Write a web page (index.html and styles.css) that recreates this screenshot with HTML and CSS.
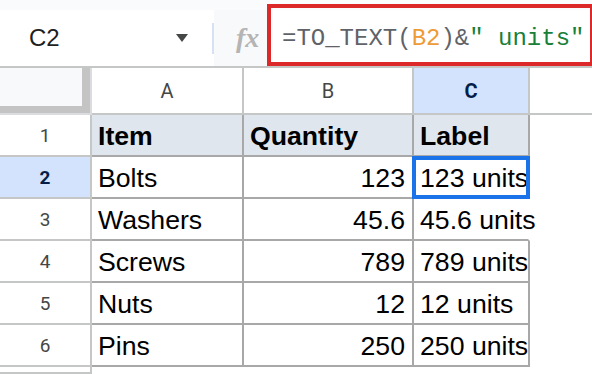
FILE: index.html
```html
<!DOCTYPE html>
<html lang="en">

<head>
    <meta charset="UTF-8">
    <meta name="viewport" content="width=device-width, initial-scale=1.0">
    <title>TO_TEXT units</title>
    <link rel="stylesheet" href="styles.css">
</head>

<body>
    <div class="strip"></div>

    <!--Barra de formulas-->
    <div class="toolbar">
        <div class="namebox">
            <span class="ref">C2</span>
            <i class="caret"></i>
        </div>
        <div class="divider"></div>
        <div class="fx">fx</div>
        <div class="formula">
            <span class="op">=TO_TEXT(</span><span class="range">B2</span><span class="op">)&amp;</span><span class="str">" units"</span>
        </div>
        <div class="highlight"></div>
    </div>

    <!--Hoja-->
    <div class="sheet">
        <div class="corner"><i></i></div>
        <div class="col">A</div>
        <div class="col">B</div>
        <div class="col active">C</div>
        <div class="col last"></div>

        <div class="row">1</div>
        <div class="cell head">Item</div>
        <div class="cell head">Quantity</div>
        <div class="cell head end">Label</div>
        <div class="blank"></div>

        <div class="row active">2</div>
        <div class="cell">Bolts</div>
        <div class="cell num">123</div>
        <div class="cell end selected">123 units</div>
        <div class="blank"></div>

        <div class="row">3</div>
        <div class="cell">Washers</div>
        <div class="cell num">45.6</div>
        <div class="cell">45.6 units</div>
        <div class="blank"></div>

        <div class="row">4</div>
        <div class="cell">Screws</div>
        <div class="cell num">789</div>
        <div class="cell end">789 units</div>
        <div class="blank"></div>

        <div class="row">5</div>
        <div class="cell">Nuts</div>
        <div class="cell num">12</div>
        <div class="cell end">12 units</div>
        <div class="blank"></div>

        <div class="row">6</div>
        <div class="cell">Pins</div>
        <div class="cell num">250</div>
        <div class="cell end">250 units</div>
        <div class="blank"></div>

        <div class="row"></div>
        <div class="blank"></div>
        <div class="blank"></div>
        <div class="blank"></div>
        <div class="blank"></div>
    </div>
</body>

</html>
```

FILE: styles.css
```css
* {
    box-sizing: border-box;
}

body {
    margin: 0;
    height: 100vh;
    overflow: hidden;
    background-color: #fff;
    font-family: 'Liberation Sans', Arial, sans-serif;
}

.strip {
    height: 10px;
    background-color: #f9fbfd;
}

/*Barra de formulas*/
.toolbar {
    position: relative;
    display: flex;
    height: 58px;
    border-bottom: 2px solid #c4c7c5;
}

.namebox {
    width: 212px;
    display: flex;
    align-items: center;
    padding-left: 29px;
    padding-right: 24px;

    .ref {
        font-size: 24px;
        color: #1f1f1f;
    }

    .caret {
        margin-left: auto;
        width: 0;
        height: 0;
        border-left: 6px solid transparent;
        border-right: 6px solid transparent;
        border-top: 8px solid #444746;
    }
}

.divider {
    align-self: center;
    width: 2px;
    height: 31px;
    background-color: #d6e2f3;
}

.fx {
    width: 53px;
    display: flex;
    align-items: center;
    padding-left: 22px;
    background-color: #f8f9fa;
    font-family: 'Liberation Serif', serif;
    font-style: italic;
    font-weight: bold;
    font-size: 28px;
    color: #b4b4b4;
}

.formula {
    flex-grow: 1;
    display: flex;
    align-items: center;
    padding-left: 15px;
    white-space: nowrap;
    font-family: 'Liberation Mono', monospace;
    font-size: 24px;

    .op {
        color: #5f6368;
    }

    .range {
        color: #ee9b36;
    }

    .str {
        color: #188038;
    }
}

/*Recuadro rojo sobre la formula*/
.highlight {
    position: absolute;
    top: -6px;
    left: 267px;
    width: 327px;
    height: 62px;
    border: 4px solid #dc2828;
    pointer-events: none;
}

/*Hoja*/
.sheet {
    display: grid;
    grid-template-columns: 92px 152px 170px 116px 1fr;
    grid-template-rows: 47px repeat(6, 42px) 1fr;
    height: calc(100vh - 68px);
}

.corner {
    background-color: #c4c4c4;
    border-right: 2px solid #dadce0;
    border-bottom: 2px solid #dadce0;

    i {
        display: block;
        width: 82px;
        height: 38px;
        background-color: #f8f9fa;
    }
}

.col {
    display: flex;
    justify-content: center;
    align-items: center;
    font-family: Roboto, 'Liberation Sans', sans-serif;
    font-size: 20px;
    color: #444746;
    border-right: 2px solid #c4c7c5;
    border-bottom: 2px solid #c4c7c5;

    &.active {
        background-color: #d3e3fd;
        color: #041e49;
        font-weight: bold;
    }

    &.last {
        border-right: none;
    }
}

.row {
    display: flex;
    justify-content: center;
    align-items: center;
    font-family: Roboto, 'Liberation Sans', sans-serif;
    font-size: 19px;
    color: #444746;
    border-right: 2px solid #c4c7c5;
    border-bottom: 2px solid #c4c7c5;

    &.active {
        background-color: #d3e3fd;
        color: #041e49;
        font-weight: bold;
    }
}

.cell {
    position: relative;
    display: flex;
    align-items: flex-end;
    padding: 0 7px 4px 6px;
    font-size: 26.67px;
    line-height: 30px;
    color: #000;
    white-space: nowrap;
    border-right: 2px solid #a8a8a8;
    border-bottom: 2px solid #a8a8a8;

    &.head {
        background-color: #dfe6ee;
        font-weight: bold;
    }

    &.num {
        justify-content: flex-end;
    }

    &:nth-child(5n+4):not(.end) {
        border-right-color: transparent;
    }

    &.selected::after {
        content: '';
        position: absolute;
        top: -1px;
        left: -2px;
        right: -2px;
        bottom: -2px;
        border: 4px solid #1a73e8;
        z-index: 1;
    }
}
```
